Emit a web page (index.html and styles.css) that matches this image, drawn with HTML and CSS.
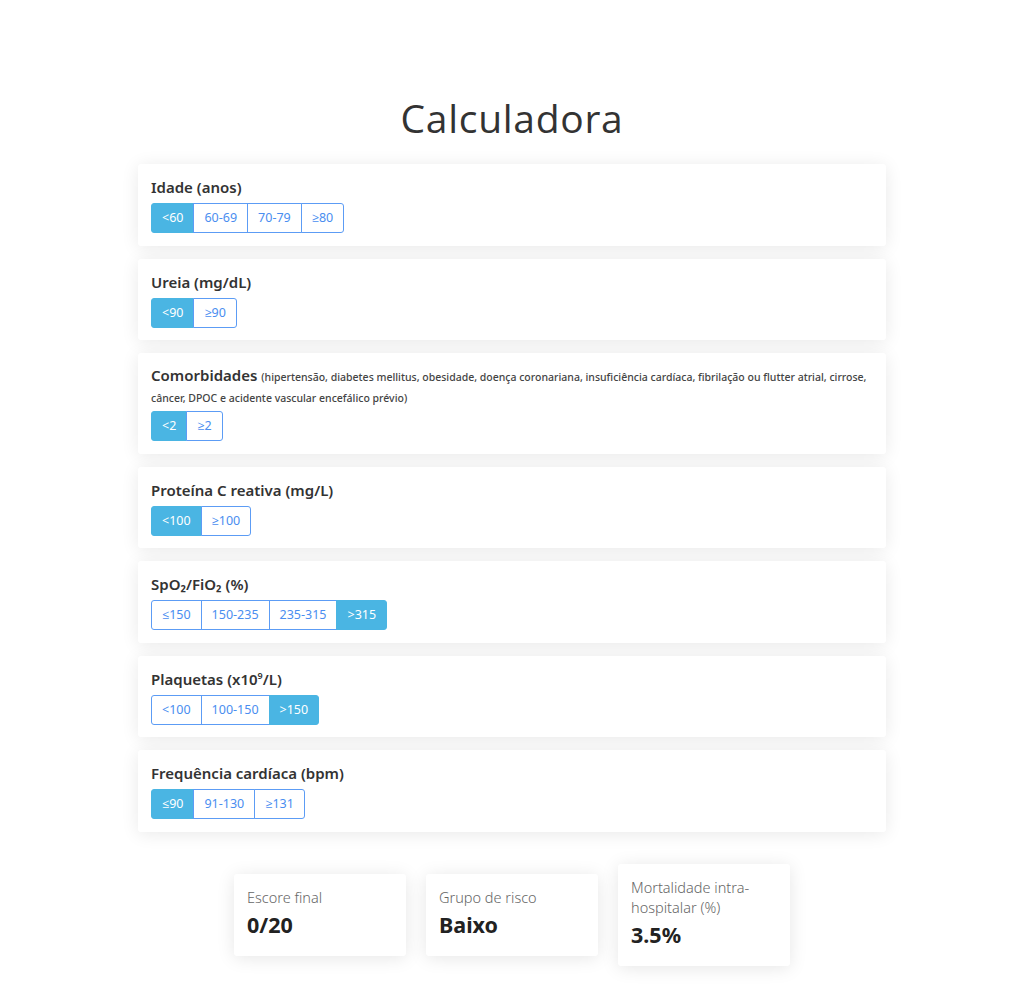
FILE: index.html
```html
<!DOCTYPE html>
<html lang="pt">
<head>
<meta charset="utf-8">
<title>Calculadora</title>
<link rel="stylesheet" href="styles.css">
</head>
<body>
<main class="page">
  <h1 class="title">Calculadora</h1>
  <section class="questions">
    <div class="card">
      <div class="label">Idade (anos)</div>
      <div class="group">
        <button class="opt active">&lt;60</button><button class="opt">60-69</button><button class="opt">70-79</button><button class="opt">≥80</button>
      </div>
    </div>
    <div class="card">
      <div class="label">Ureia (mg/dL)</div>
      <div class="group">
        <button class="opt active">&lt;90</button><button class="opt">≥90</button>
      </div>
    </div>
    <div class="card">
      <div class="label multi">Comorbidades <small class="note">(hipertensão, diabetes mellitus, obesidade, doença coronariana, insuficiência cardíaca, fibrilação ou flutter atrial, cirrose, câncer, DPOC e acidente vascular encefálico prévio)</small></div>
      <div class="group">
        <button class="opt active">&lt;2</button><button class="opt">≥2</button>
      </div>
    </div>
    <div class="card">
      <div class="label">Proteína C reativa (mg/L)</div>
      <div class="group">
        <button class="opt active">&lt;100</button><button class="opt">≥100</button>
      </div>
    </div>
    <div class="card">
      <div class="label">SpO₂/FiO₂ (%)</div>
      <div class="group">
        <button class="opt">≤150</button><button class="opt">150-235</button><button class="opt">235-315</button><button class="opt active">&gt;315</button>
      </div>
    </div>
    <div class="card">
      <div class="label">Plaquetas (x10<sup>9</sup>/L)</div>
      <div class="group">
        <button class="opt">&lt;100</button><button class="opt">100-150</button><button class="opt active">&gt;150</button>
      </div>
    </div>
    <div class="card">
      <div class="label">Frequência cardíaca (bpm)</div>
      <div class="group">
        <button class="opt active">≤90</button><button class="opt">91-130</button><button class="opt">≥131</button>
      </div>
    </div>
  </section>
  <section class="results">
    <div class="result">
      <div class="r-label">Escore final</div>
      <div class="r-value">0/20</div>
    </div>
    <div class="result">
      <div class="r-label">Grupo de risco</div>
      <div class="r-value">Baixo</div>
    </div>
    <div class="result">
      <div class="r-label">Mortalidade intra-hospitalar (%)</div>
      <div class="r-value">3.5%</div>
    </div>
  </section>
</main>
</body>
</html>
```
FILE: styles.css
```css
* { box-sizing: border-box; }
html, body { margin: 0; padding: 0; background: #fff; }
body {
  font-family: "Noto Sans", "Open Sans", sans-serif;
  color: #333;
}
.page {
  width: 748px;
  margin: 0 auto;
  padding-top: 92px;
}
.title {
  font-family: "Open Sans", "Noto Sans", sans-serif;
  font-weight: 400;
  font-size: 39px;
  line-height: 52px;
  text-align: center;
  margin: 0 0 20px;
  color: #333;
  letter-spacing: 0.7px;
}
.questions {
  display: flex;
  flex-direction: column;
  gap: 13px;
}
.card {
  background: #fff;
  border-radius: 3px;
  box-shadow: 0 2px 18px rgba(0, 0, 0, 0.09);
  padding: 13px 13px 12.5px;
}
.label {
  font-size: 15px;
  font-weight: 600;
  line-height: 20px;
  height: 20px;
  color: #333;
  margin-bottom: 6px;
}
.label.multi {
  line-height: 19.5px;
  height: 39px;
}
.note {
  font-size: 10.5px;
  font-weight: 500;
  line-height: 19px;
  color: #444;
}
.label sup {
  font-size: 9px;
  line-height: 0;
}
.group {
  display: inline-flex;
}
.opt {
  font-family: inherit;
  font-size: 12.5px;
  line-height: 18px;
  height: 30px;
  padding: 5px 10px;
  background: #fff;
  color: #4a8ef0;
  border: 1px solid #5c9cf5;
  margin: 0 0 0 -1px;
  border-radius: 0;
  cursor: pointer;
}
.opt:first-child { margin-left: 0; border-radius: 3px 0 0 3px; }
.opt:last-child { border-radius: 0 3px 3px 0; }
.opt.active {
  background: #4ab5e3;
  border-color: #4ab5e3;
  color: #fff;
}
.results {
  display: flex;
  justify-content: center;
  align-items: center;
  gap: 20px;
  margin-top: 32px;
  margin-bottom: 40px;
}
.result {
  width: 172px;
  background: #fff;
  border-radius: 3px;
  box-shadow: 0 2px 18px rgba(0, 0, 0, 0.1);
  padding: 13px 13px 13px;
}
.r-label {
  font-size: 14.5px;
  font-weight: 300;
  line-height: 20px;
  color: #666;
}
.r-value {
  font-size: 21.5px;
  font-weight: 700;
  line-height: 36px;
  color: #222;
}
```
